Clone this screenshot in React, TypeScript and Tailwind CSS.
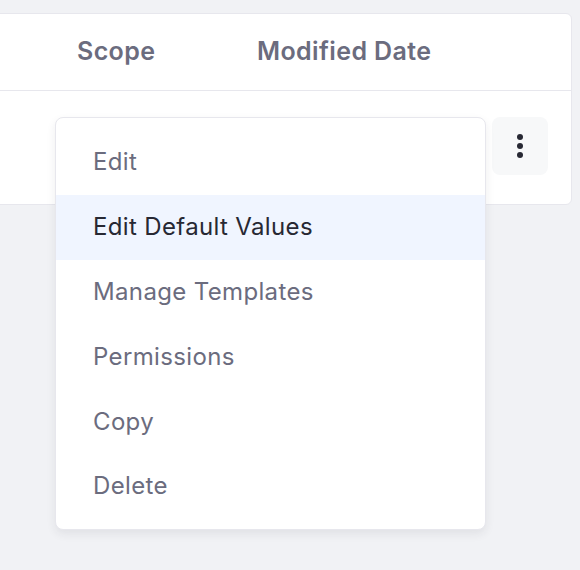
import React from 'react';

const items = ['Edit', 'Edit Default Values', 'Manage Templates', 'Permissions', 'Copy', 'Delete'];

export default function App() {
  const active = 1;

  return (
    <div
      className="min-h-[570px] w-[580px] overflow-hidden bg-[#f1f2f5] pt-[13px] pr-[8px]"
      style={{ fontFamily: 'Inter, "Noto Sans", sans-serif' }}
    >
      <div className="relative ml-[-20px] h-[192px] rounded-r-[6px] border border-[#e7e7ed] bg-white">
        {/* Header */}
        <div className="flex h-[77px] items-center border-b border-[#e7e7ed] pl-[96px] text-[25px] font-semibold tracking-[0.4px] text-[#6b6c7e]">
          <span className="w-[180px]">Scope</span>
          <span>Modified Date</span>
        </div>

        {/* Row */}
        <div className="flex h-[113px] items-start justify-end pr-[23px] pt-[26px]">
          <button
            type="button"
            className="flex h-[58px] w-[56px] flex-col items-center justify-center gap-[3px] rounded-[8px] bg-[#f7f8f9]"
          >
            <span className="h-[6px] w-[6px] rounded-full bg-[#272833]" />
            <span className="h-[6px] w-[6px] rounded-full bg-[#272833]" />
            <span className="h-[6px] w-[6px] rounded-full bg-[#272833]" />
          </button>
        </div>

        {/* Dropdown menu */}
        <div className="absolute left-[74px] top-[103px] w-[431px] rounded-[8px] border border-[#e7e7ed] bg-white pt-[12px] pb-[10px] shadow-[0_4px_10px_rgba(39,40,51,0.08)]">
          {items.map((label, i) => (
            <div
              key={label}
              className={`flex h-[64.8px] items-center px-[37px] text-[24px] tracking-[0.35px] ${
                i === active ? 'bg-[#f0f5ff] text-[#272833]' : 'text-[#6b6c7e]'
              }`}
            >
              {label}
            </div>
          ))}
        </div>
      </div>
    </div>
  );
}
